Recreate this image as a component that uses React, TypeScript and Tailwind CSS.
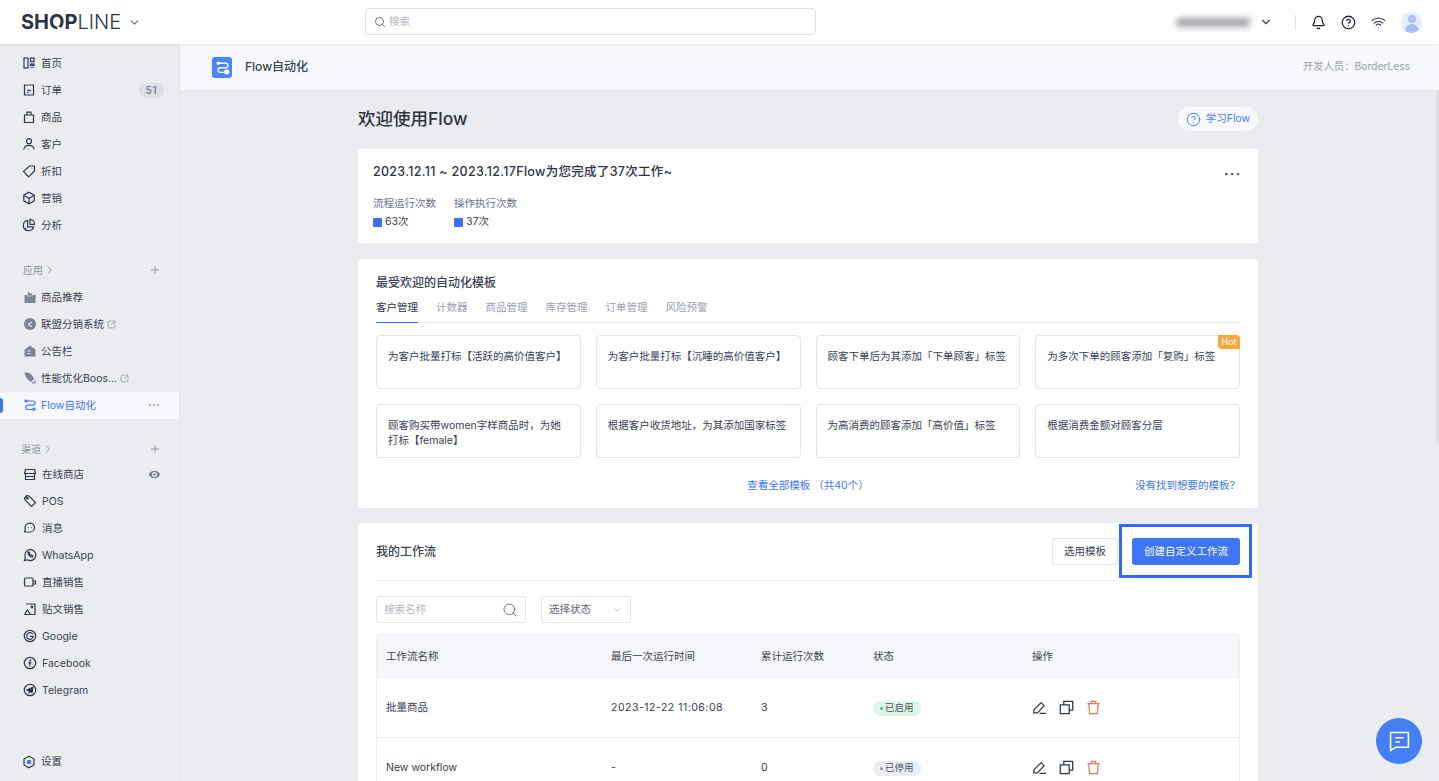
import { Bell, ChevronDown, ChevronRight, CircleHelp, Ellipsis, Eye, Plus, Search, SquareArrowOutUpRight, Wifi } from "lucide-react"
import type { ReactNode } from "react"

const font = { fontFamily: "Inter, 'Noto Sans CJK SC', sans-serif" }

type IconProps = { children: ReactNode; className?: string }

function Ico({ children, className = "text-[#30384a]" }: IconProps) {
  return (
    <svg viewBox="0 0 14 14" fill="none" stroke="currentColor" strokeWidth="1.2" className={`h-3.5 w-3.5 shrink-0 ${className}`}>
      {children}
    </svg>
  )
}

const blue = "#3d75f5"

const mainNav: [string, ReactNode, string?][] = [
  ["首页", <><rect x="2" y="2" width="4" height="10" /><rect x="8.500" y="2" width="3.500" height="3.600" /><rect x="8.500" y="8" width="3.500" height="1.400" /><path d="M8.500 11.500h3.500" stroke={blue} /></>],
  ["订单", <><path d="M2.500 2h9v10h-9z" /><path d="M5 7.500h4" /><path d="M5 9.600h2.400" stroke={blue} /></>, "51"],
  ["商品", <><path d="M2.500 5h9v7.500h-9z" /><path d="M5 5V2.200h4V5" /></>],
  ["客户", <><circle cx="7" cy="4.200" r="2.500" /><path d="M1.800 12.500c.4-3 2.400-4.200 5.200-4.200s4.800 1.200 5.200 4.200" /><path d="M6.400 12v1" stroke={blue} /></>],
  ["折扣", <><path d="M1.500 7.400 7.600 2h4.900v4.900L6.600 12.800z" /><path d="M9.600 4.200h.8" stroke={blue} /></>],
  ["营销", <><path d="m7 1.200 5.200 3v5.600L7 12.800l-5.200-3V4.200z" /><path d="m2 4.400 5 2.800 5-2.800M7 7.200v5.400" /></>],
  ["分析", <><path d="M5.600 2.400a5.200 5.200 0 1 0 6 6.400H5.600z" /><path d="M8 1.400a5 5 0 0 1 4.600 4.900H8z" /><path d="M3 9.600c.5 1 1.300 1.600 2.300 1.900" stroke={blue} /></>],
]

const appNav: [string, ReactNode, boolean?][] = [
  ["商品推荐", <><path d="M1.500 5h11v8h-11z" fill="currentColor" stroke="none" /><path d="M4.500 6V3.500L5.500 1.500l1.500 1.500 2.500.5v2.500z" fill="currentColor" stroke="#ebecf0" strokeWidth=".6" /></>],
  ["联盟分销系统", <><circle cx="7" cy="7" r="6" fill="currentColor" stroke="none" /><path d="M5 7.200 8.800 5M5 7.200 8.800 9.400" stroke="#ebecf0" /></>, true],
  ["公告栏", <><path d="M1.500 5.500 7 1.500l5.500 4v7h-11z" fill="currentColor" stroke="none" /><path d="M4.500 7h3M4.500 9.500h3" stroke="#ebecf0" /></>],
  ["性能优化Boos...", <><path d="M1.500 1.500c4-.6 7.500 1 9.500 6.500l-3 3C5 9.500 2.200 6 1.500 1.500z" fill="currentColor" stroke="none" /><path d="m9 11.500 2.500 1M11.500 9.500l1 2.500" /></>, true],
]

const channelNav: [string, ReactNode][] = [
  ["POS", <><path d="M1.500 4 4 1.500 6 2l6.500 6.500-4 4L2 6z" /><circle cx="4.200" cy="4.200" r=".8" /></>],
  ["消息", <><path d="M7 2a5 5 0 0 0-4.800 6.200L1.500 11h5.500a4.500 4.500 0 0 0 0-9z" /><path d="M5 6.500h.6M8 6.500h.6" /></>],
  ["WhatsApp", <><path d="M1.500 12.500 2.400 9.500A5.500 5.500 0 1 1 4.500 11.800z" /><path d="M5 4.500c-.6 2 2.500 5 4.500 4.500l.3-1.300-1.500-.7-.6.600c-.7-.3-1.200-.8-1.500-1.500l.6-.6-.7-1.500z" /></>],
  ["直播销售", <><rect x="1.500" y="3" width="8.500" height="8" rx="1" /><path d="M10 6h2.500v3H10" /></>],
  ["贴文销售", <><path d="M3 2h9v10.500H1.500" /><path d="M1.500 12.500 4.500 8l3 4.500" /><circle cx="9" cy="5" r=".8" /></>],
  ["Google", <><circle cx="7" cy="7" r="5.700" /><path d="M9.800 5.200A3.300 3.300 0 1 0 10.300 7.300H7" /></>],
  ["Facebook", <><circle cx="7" cy="7" r="5.700" /><path d="M8.500 3.800c-1.300 0-1.700.7-1.700 1.800v4.800M5.300 6.800h3" /></>],
  ["Telegram", <><circle cx="7" cy="7" r="5.700" /><path d="M9.800 4.400 4 7l1.900.7.3 2 1.200-1.200 1.700 1z" fill="currentColor" /></>],
]

function NavRow({ icon, label, right, muted, gap = "ml-[4px]" }: { icon: ReactNode; label: string; right?: ReactNode; muted?: boolean; gap?: string }) {
  return (
    <div className="flex h-[27px] items-center pl-[23px] pr-[15px]">
      <Ico className={muted ? "text-[#7d8494]" : "text-[#30384a]"}>{icon}</Ico>
      <span className={`${gap} pt-[2px] text-[10.500px] text-[#3a4150]`}>{label}</span>
      {right}
    </div>
  )
}

function Sidebar() {
  return (
    <aside className="flex w-[180px] shrink-0 flex-col border-r border-[#e2e3e9] bg-[#ebecf0] pt-[5.500px]">
      {mainNav.map(([label, icon, badge]) => (
        <div key={label} className="flex h-[27px] items-center pl-[22px] pr-[15px]">
          <Ico>{icon}</Ico>
          <span className="ml-[5px] pt-[2px] text-[10.500px] text-[#3a4150]">{label}</span>
          {badge && <span className="ml-auto rounded-full bg-[#dcdee7] px-[7px] text-[10px] leading-[15px] tracking-[0.5px] text-[#5f6675]">{badge}</span>}
        </div>
      ))}
      <div className="mt-[18px] flex h-[27px] items-center pl-[23px] pr-[18px] text-[10px] text-[#8f95a3]">
        应用 <ChevronRight className="ml-[1px] h-3 w-3" />
        <Plus className="ml-auto h-3 w-3" />
      </div>
      {appNav.map(([label, icon, ext]) => (
        <NavRow key={label} icon={icon} label={label} muted right={ext ? <SquareArrowOutUpRight className="ml-[3px] h-[9px] w-[9px] text-[#8f95a3]" /> : undefined} />
      ))}
      <div className="relative flex h-[27px] items-center bg-[#f7f8fc] pl-[23px] pr-[18px]">
        <span className="absolute left-0 top-[6px] h-[15px] w-[2.500px] rounded-r-sm bg-[#3d75f5]" />
        <Ico className="text-[#3d75f5]"><path d="M3.500 3h6.500a2 2 0 0 1 0 4.200H4.500a2.200 2.200 0 0 0 0 4.300h5.500" /><circle cx="3" cy="3" r="1" /><circle cx="11" cy="11.300" r="1.200" /></Ico>
        <span className="ml-[4px] pt-[2px] text-[10.500px] text-[#3d75f5]">Flow自动化</span>
        <Ellipsis className="ml-auto h-[14px] w-[14px] text-[#a9aeba]" />
      </div>
      <div className="mt-[17px] flex h-[27px] items-center pl-[21px] pr-[18px] text-[10px] text-[#8f95a3]">
        渠道 <ChevronRight className="ml-[1px] h-3 w-3" />
        <Plus className="ml-auto h-3 w-3" />
      </div>
      <div className="-mt-[2px]">
        <NavRow gap="ml-[5px]" icon={<><path d="M2.500 2.500h9l1 4h-11z" /><path d="M2.500 6.500v6h9v-6M2.500 9.500h9" /></>} label="在线商店" right={<Eye className="ml-auto mr-[2px] h-[15px] w-[15px] fill-[#7d8494] text-[#ebecf0]" />} />
        {channelNav.map(([label, icon]) => (
          <NavRow gap="ml-[5px]" key={label} icon={icon} label={label} />
        ))}
      </div>
      <div className="mt-auto flex h-[27px] items-center pb-[11px] pl-[22px]">
        <Ico><path d="m7 1.200 5 2.900v5.800l-5 2.900-5-2.900V4.100z" /><circle cx="7" cy="7" r="1.700" fill={blue} stroke={blue} /></Ico>
        <span className="ml-[5px] text-[10.500px] text-[#3a4150]">设置</span>
      </div>
    </aside>
  )
}

function TopBar() {
  return (
    <header className="relative z-10 flex h-[44px] shrink-0 items-center bg-white pl-[21px] shadow-[0_1px_3px_rgba(30,40,70,0.08)]">
      <div className="flex w-[344px] items-center">
        <span className="text-[20px] font-bold leading-none text-[#2b3440]">
          SH
          <span className="relative">
            O
            <svg viewBox="0 0 8 8" className="absolute bottom-[2px] right-[1px] h-[8px] w-[8px]">
              <path d="M1 1.500 5 3l2 4-3.500-1z" fill="white" />
            </svg>
          </span>
          P<span className="font-light">LINE</span>
        </span>
        <ChevronDown className="ml-[7px] h-[13px] w-[13px] text-[#6c7382]" />
      </div>
      <div className="-mt-px flex h-[27px] w-[451px] items-center rounded-[3px] border border-[#dfe1e8] pl-[8px] text-[10.500px] text-[#b3b7c2]">
        <Search className="mr-[3px] h-[12px] w-[12px] text-[#6c7382]" />
        搜索
      </div>
      <div className="ml-auto flex items-center pr-[17px]">
        <div className="h-[9px] w-[74px] rounded-sm bg-[#a2a4ab] blur-[3px]" />
        <ChevronDown className="ml-[9px] h-[14px] w-[14px] text-[#3a4150]" />
        <div className="ml-[22px] h-[15px] w-px bg-[#e0e2e8]" />
        <Bell className="ml-[15px] h-[15px] w-[15px] text-[#1d2330]" />
        <CircleHelp className="ml-[15px] h-[15px] w-[15px] text-[#1d2330]" />
        <Wifi className="ml-[15px] h-[15px] w-[15px] text-[#4a5160]" />
        <div className="ml-[15px] flex h-[21px] w-[21px] flex-col items-center overflow-hidden rounded-full bg-[#e6ecfb] pt-[3px]">
          <span className="h-[8px] w-[8px] rounded-full bg-[#a9c0f2]" />
          <span className="mt-[1px] h-[9px] w-[14px] rounded-t-full bg-[#a9c0f2]" />
        </div>
      </div>
    </header>
  )
}

const tabs = ["客户管理", "计数器", "商品管理", "库存管理", "订单管理", "风险预警"]

const templates = [
  "为客户批量打标【活跃的高价值客户】",
  "为客户批量打标【沉睡的高价值客户】",
  "顾客下单后为其添加「下单顾客」标签",
  "为多次下单的顾客添加「复购」标签",
  "顾客购买带women字样商品时，为她打标【female】",
  "根据客户收货地址，为其添加国家标签",
  "为高消费的顾客添加「高价值」标签",
  "根据消费金额对顾客分层",
]

function SummaryCard() {
  return (
    <section className="mt-[18px] h-[94px] rounded-[3px] bg-white px-[15px] pt-[14px]">
      <div className="flex h-[17px] items-center justify-between">
        <h2 className="text-[12.500px] font-medium leading-[17px] tracking-[0.3px] text-[#2e3442]">2023.12.11 ~ 2023.12.17Flow为您完成了37次工作~</h2>
        <Ellipsis className="mr-[1px] mt-[4px] h-[20px] w-[20px] text-[#3a4150]" strokeWidth={1.200} />
      </div>
      <div className="mt-[15px] flex gap-[18px] text-[10.500px] leading-[18px]">
        {[["流程运行次数", "63次"], ["操作执行次数", "37次"]].map(([label, value]) => (
          <div key={label}>
            <div className="text-[#6b7280]">{label}</div>
            <div className="flex items-center text-[#3a4150]">
              <span className="mr-[3px] h-[9px] w-[9px] rounded-[1px] bg-[#3d6ff5]" />
              {value}
            </div>
          </div>
        ))}
      </div>
    </section>
  )
}

function TemplatesCard() {
  return (
    <section className="mt-[16px] h-[249px] rounded-[3px] bg-white px-[18px] pt-[15px]">
      <h2 className="text-[12px] font-medium leading-[18px] text-[#3a4150]">最受欢迎的自动化模板</h2>
      <div className="mt-[7px] flex gap-[18px] border-b border-[#e6e8ee] text-[10.500px]">
        {tabs.map((t, i) => (
          <div key={t} className={i === 0 ? "-mb-px border-b border-[#3d6ff5] pb-[5px] leading-[18px] text-[#2e3442]" : "pb-[5px] leading-[18px] text-[#9ba1ad]"}>
            {t}
          </div>
        ))}
      </div>
      <div className="mt-[12px] grid grid-cols-4 gap-x-[15px] gap-y-[15px]">
        {templates.map((t, i) => (
          <div key={t} className="relative h-[54px] rounded-[4px] border border-[#e3e5eb] px-[11px] pt-[13px] text-[10.500px] leading-[15px] text-[#3a4150]">
            {t}
            {i === 3 && <span className="absolute -right-px -top-px rounded-bl-[4px] rounded-tr-[4px] bg-[#f5a93b] px-[3.500px] text-[9px] leading-[14px] text-white">Hot</span>}
          </div>
        ))}
      </div>
      <div className="relative mt-[19px] text-center text-[10.500px] leading-[18px] text-[#3d75f5]">
        查看全部模板 （共40个）
        <span className="absolute right-[5px] top-0">没有找到想要的模板?</span>
      </div>
    </section>
  )
}

function Row({ name, time, count, on }: { name: string; time: string; count: string; on: boolean }) {
  return (
    <div className="grid h-[60px] grid-cols-[225px_150px_112px_159px_1fr] items-center border-t border-[#f0f1f5] pl-[9px] text-[10.500px] text-[#3a4150]">
      <span>{name}</span>
      <span className="tracking-[0.5px]">{time}</span>
      <span>{count}</span>
      <span>
        <span className={`inline-flex h-[15px] items-center rounded-full px-[7px] text-[9.500px] ${on ? "bg-[#dcf5e6] text-[#4b5563]" : "bg-[#eceef3] text-[#4b5563]"}`}>
          <span className={`mr-[2px] h-[3px] w-[3px] rounded-full ${on ? "bg-[#45c07f]" : "bg-[#8f95a3]"}`} />
          {on ? "已启用" : "已停用"}
        </span>
      </span>
      <span className="flex items-center gap-[12px]">
        <svg viewBox="0 0 14 14" fill="none" stroke="#30384a" strokeWidth="1.100" className="h-[15px] w-[15px]">
          <path d="M1.500 12 2 9l6.500-6.500 2.800 2.800L5 12zM7 12.500h6" />
        </svg>
        <svg viewBox="0 0 14 14" fill="none" stroke="#30384a" strokeWidth="1.200" className="h-[15px] w-[15px]">
          <path d="M1.200 4.500h8.300v8.300H1.200zM4.500 4.500V1.200h8.300v8.300H9.500" />
        </svg>
        <svg viewBox="0 0 14 14" fill="none" stroke="#e8795f" strokeWidth="1.200" className="h-[15px] w-[15px]">
          <path d="M1.300 3.300h11.400M5 3.300V1.200h4v2.100M2.600 3.300l.8 9.500h7.200l.8-9.500" />
        </svg>
      </span>
    </div>
  )
}

function WorkflowCard() {
  return (
    <section className="relative mt-[15px] rounded-t-[3px] bg-white px-[18px]">
      <div className="flex h-[58px] items-center border-b border-[#f0f1f5]">
        <h2 className="text-[12px] font-medium text-[#3a4150]">我的工作流</h2>
        <div className="ml-auto flex h-[27px] w-[66px] items-center justify-center rounded-[3px] border border-[#e3e5eb] text-[10.500px] text-[#3a4150]">选用模板</div>
        <div className="ml-[14px] flex h-[27px] w-[108px] items-center justify-center rounded-[3px] bg-[#3d75f5] text-[10.500px] text-white">创建自定义工作流</div>
      </div>
      <div className="absolute right-[6px] top-[1px] h-[54px] w-[133px] border-[3px] border-[#2f6bf6]" />
      <div className="mt-[15px] flex gap-[15px]">
        <div className="flex h-[27px] w-[150px] items-center justify-between rounded-[3px] border border-[#e3e5eb] pl-[7px] pr-[7px] text-[10.500px] text-[#b3b7c2]">
          搜索名称
          <Search className="h-[16px] w-[16px] text-[#5f6675]" strokeWidth={1.400} />
        </div>
        <div className="flex h-[27px] w-[90px] items-center justify-between rounded-[3px] border border-[#e3e5eb] pl-[7px] pr-[8px] text-[10.500px] text-[#5f6675]">
          选择状态
          <ChevronDown className="h-[10px] w-[10px] text-[#a9aeba]" />
        </div>
      </div>
      <div className="mt-[11px] rounded-t-[4px] border border-b-0 border-[#eef0f4]">
        <div className="grid h-[42px] grid-cols-[225px_150px_112px_159px_1fr] items-center bg-[#f6f7fa] pl-[9px] pt-[2px] text-[10.500px] text-[#3a4150]">
          <span>工作流名称</span>
          <span>最后一次运行时间</span>
          <span>累计运行次数</span>
          <span>状态</span>
          <span>操作</span>
        </div>
        <Row name="批量商品" time="2023-12-22 11:06:08" count="3" on />
        <Row name="New workflow" time="-" count="0" on={false} />
      </div>
    </section>
  )
}

export default function App() {
  return (
    <div className="relative flex h-[781px] w-[1439px] flex-col overflow-hidden bg-[#ebecf0]" style={font}>
      <TopBar />
      <div className="flex min-h-0 flex-1">
        <Sidebar />
        <main className="min-w-0 flex-1">
          <div className="flex h-[46px] items-center bg-[#f7f8fc] pl-[32px] pr-[29px]">
            <span className="flex h-[21px] w-[20px] items-center justify-center rounded-[3px] bg-[#4a86f7]">
              <svg viewBox="0 0 14 14" fill="none" stroke="white" strokeWidth="1.300" className="h-[15px] w-[15px]">
                <path d="M3.500 3h6.500a2 2 0 0 1 0 4.200H4.500a2.200 2.200 0 0 0 0 4.300h4" />
                <circle cx="3" cy="3" r="1" />
                <circle cx="11" cy="11" r="1.800" fill="white" />
              </svg>
            </span>
            <span className="ml-[13px] text-[12px] font-medium text-[#3a4150]">Flow自动化</span>
            <span className="ml-auto text-[10.500px] tracking-[-0.13px] text-[#9ba1ad]">开发人员：BorderLess</span>
          </div>
          <div className="ml-[178px] w-[900px]">
            <div className="mt-[17px] flex h-[24px] items-center justify-between">
              <h1 className="text-[17.500px] font-medium text-[#2e3442]">欢迎使用Flow</h1>
              <div className="flex h-[24px] w-[80px] items-center justify-center rounded-full bg-[#f7f8fc] text-[10.500px] text-[#4a80f0]">
                <CircleHelp className="mr-[5px] h-[15px] w-[15px]" strokeWidth={1.600} />
                学习Flow
              </div>
            </div>
            <SummaryCard />
            <TemplatesCard />
            <WorkflowCard />
          </div>
        </main>
      </div>
      <div className="absolute bottom-[17px] right-[17px] flex h-[46px] w-[46px] items-center justify-center rounded-full bg-[#437ff5]">
        <svg viewBox="0 0 20 20" fill="none" stroke="white" strokeWidth="1.500" className="h-[21px] w-[21px]">
          <path d="M1.500 1.500h17v14H6.500l-5 3zM6 6.500h8M6 10.500h4.500" />
        </svg>
      </div>
      <div className="absolute right-0 top-[90px] h-[355px] w-[3px] bg-[#dfe1e7]" />
    </div>
  )
}
